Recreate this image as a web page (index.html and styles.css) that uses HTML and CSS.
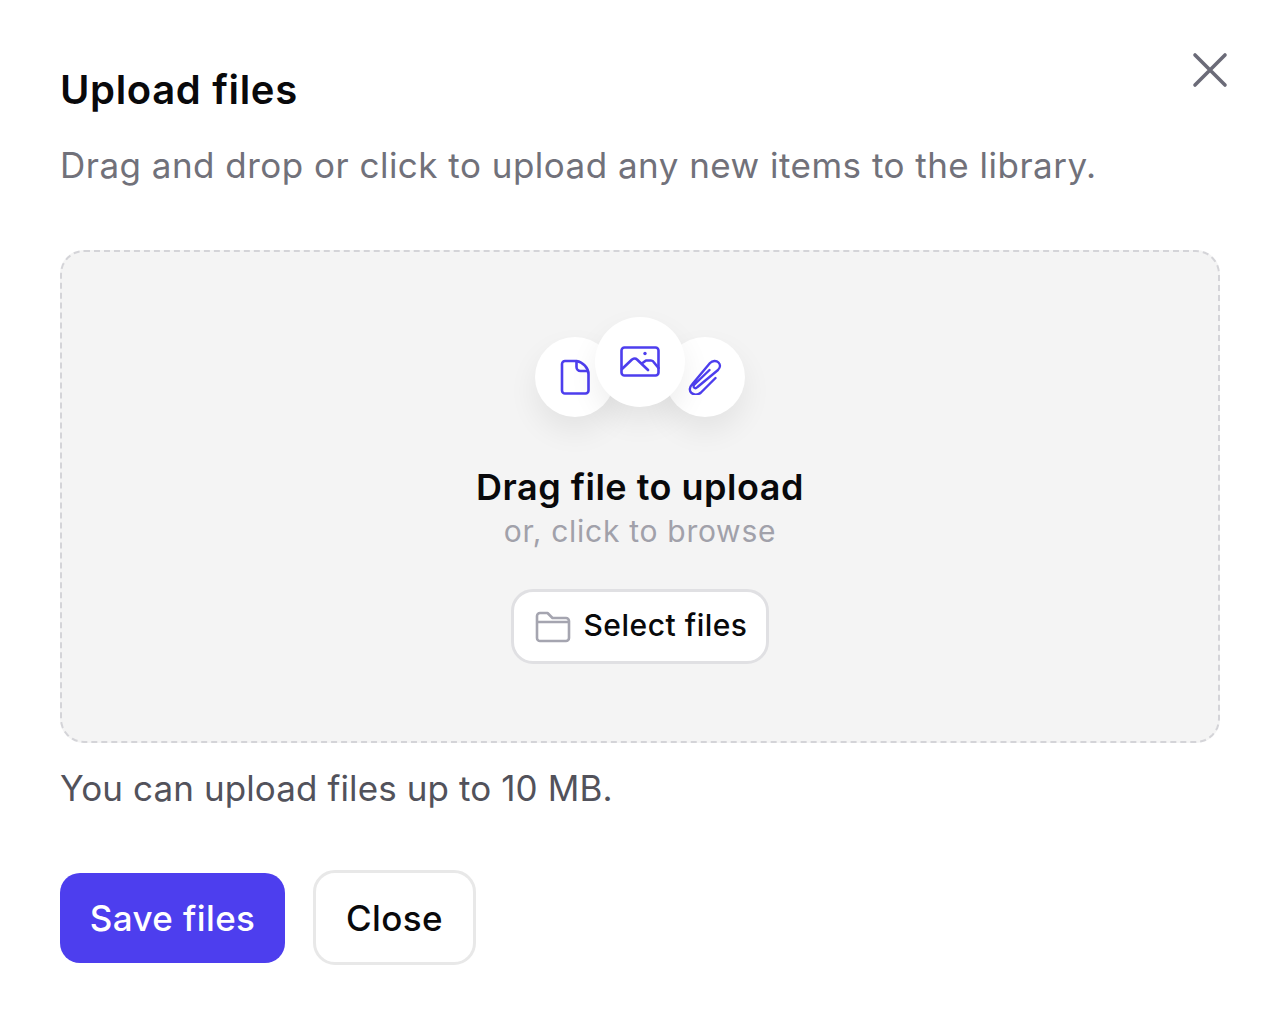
FILE: index.html
```html
<!DOCTYPE html>
<html lang="en">
<head>
    <meta charset="UTF-8">
    <meta name="viewport" content="width=device-width, initial-scale=1.0">
    <title>Upload files</title>
    <link rel="stylesheet" href="styles.css">
</head>
<body>
    <div class="modal">
        <button class="close-icon" aria-label="Close">
            <svg width="44" height="44" viewBox="0 0 44 44" fill="none" stroke="#6b6b78" stroke-width="3.6" stroke-linecap="round"><path d="M7 7 37 37M37 7 7 37"/></svg>
        </button>

        <h1>Upload files</h1>
        <p class="subtitle">Drag and drop or click to upload any new items to the library.</p>

        <div class="dropzone">
            <div class="icons">
                <div class="circle">
                    <svg width="30" height="36" viewBox="0 0 30 36" fill="none" stroke="#4d3eee" stroke-width="2.6" stroke-linejoin="round"><path d="M5 2H16.500C23 3 28.500 9 28.500 15V31.500a3 3 0 0 1-3 3H5a3 3 0 0 1-3-3V5a3 3 0 0 1 3-3Z"/><path d="M16.500 2V8a4 4 0 0 0 4 4H28"/></svg>
                </div>
                <div class="circle circle-main">
                    <svg width="40" height="32" viewBox="0 0 40 32" fill="none" stroke="#4d3eee" stroke-width="2.600" stroke-linejoin="round" stroke-linecap="round"><rect x="1.500" y="1.500" width="37" height="28" rx="3"/><path d="M2 23 12 13.500q3-2 5 0L28 24M22.500 17 26 14.500 31 14.500q2 0 3 2L38.500 22"/><circle cx="25" cy="7.500" r="1.700" fill="#4d3eee" stroke="none"/></svg>
                </div>
                <div class="circle">
                    <svg width="34" height="36" viewBox="1 0 34 36" fill="none" stroke="#4d3eee" stroke-width="2.400" stroke-linecap="round" stroke-linejoin="round"><path d="M28.500 19 14 33.500c-3 2.500-7 2.500-9.500.5s-2-6 .5-8.500L23 4c2.500-2.500 6.500-2.500 8.500-.5s2 5-.5 7.500L10.500 28c-1.500 1.500-3 1-3.500.5s-.5-2 .5-3L22.500 11"/></svg>
                </div>
            </div>
            <div class="drop-title">Drag file to upload</div>
            <div class="drop-sub">or, click to browse</div>
            <button class="select-btn">
                <svg width="36" height="32" viewBox="0 0 36 32" fill="none" stroke="#a5a5b0" stroke-width="2.600" stroke-linejoin="round"><path d="M2 9V5a3 3 0 0 1 3-3h7.500l5 5H31a3 3 0 0 1 3 3v17a3 3 0 0 1-3 3H5a3 3 0 0 1-3-3V9Zm0 2h32"/></svg>
                <span class="select-label">Select files</span>
            </button>
        </div>

        <p class="note">You can upload files up to 10 MB.</p>

        <div class="actions">
            <button class="btn btn-primary">Save files</button>
            <button class="btn btn-outline">Close</button>
        </div>
    </div>
</body>
</html>
```

FILE: styles.css
```css
* {
    box-sizing: border-box;
}
body {
    margin: 0;
    background-color: #fff;
    font-family: Inter, "Liberation Sans", sans-serif;
}
button {
    font-family: inherit;
    cursor: pointer;
}
.modal {
    position: relative;
    padding: 64px 60px 0;
}
.close-icon {
    position: absolute;
    top: 48px;
    right: 48px;
    padding: 0;
    border: none;
    background: none;
    display: flex;
}
h1 {
    margin: 0;
    font-size: 40px;
    line-height: 52px;
    font-weight: 600;
    letter-spacing: 0.65px;
    color: #09090b;
}
.subtitle {
    margin: 0;
    padding-top: 27px;
    font-size: 35px;
    line-height: 44px;
    letter-spacing: 0.48px;
    color: #71717a;
}
.dropzone {
    height: 493px;
    margin-top: 63px;
    padding-top: 65px;
    display: flex;
    flex-direction: column;
    align-items: center;
    background-color: #f4f4f4;
    border: 2px dashed #d4d4d8;
    border-radius: 24px;
}
.icons {
    display: flex;
    align-items: flex-end;
    height: 100px;
}
.circle {
    width: 80px;
    height: 80px;
    display: flex;
    align-items: center;
    justify-content: center;
    border-radius: 50%;
    background-color: #fff;
    box-shadow: 0 14px 30px rgba(0,0,0,0.07);
}
.circle-main {
    position: relative;
    width: 90px;
    height: 90px;
    margin: 0 -20px 10px;
}
.drop-title {
    margin-top: 49px;
    font-size: 36px;
    line-height: 42px;
    font-weight: 600;
    letter-spacing: 0.5px;
    color: #09090b;
}
.drop-sub {
    margin-top: 1px;
    font-size: 30px;
    line-height: 44px;
    letter-spacing: 0.72px;
    color: #a1a1aa;
}
.select-btn {
    width: 258px;
    height: 75px;
    margin-top: 36px;
    display: flex;
    align-items: center;
    justify-content: center;
    gap: 12px;
    padding: 0 0 0 3px;
    font-size: 30px;
    font-weight: 500;
    letter-spacing: 0.5px;
    color: #09090b;
    background-color: #fff;
    border: 3px solid #e0e0e3;
    border-radius: 22px;
}
.select-label {
    margin-bottom: 3px;
}
.note {
    margin: 0;
    padding-top: 23px;
    font-size: 35px;
    line-height: 44px;
    letter-spacing: 0.1px;
    color: #52525b;
}
.actions {
    display: flex;
    align-items: center;
    gap: 28px;
    margin-top: 60px;
}
.btn {
    height: 90px;
    font-size: 35px;
    font-weight: 500;
    letter-spacing: 0.4px;
    border-radius: 20px;
}
.btn-primary {
    width: 225px;
    color: #fff;
    background-color: #4d3eee;
    border: none;
}
.btn-outline {
    width: 163px;
    height: 95px;
    color: #09090b;
    background-color: #fff;
    border: 3px solid #e8e8e8;
    border-radius: 22px;
}
```
